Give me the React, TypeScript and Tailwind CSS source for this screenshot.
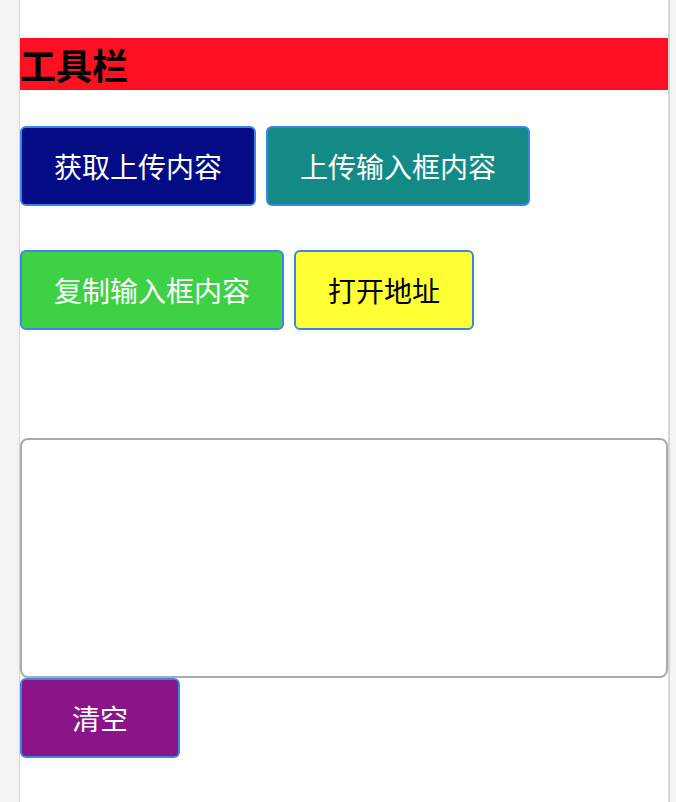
export default function App() {
  return (
    <div className="min-h-[802px] w-full bg-[#f3f3f3] font-['Noto_Sans_CJK_SC',sans-serif]">
      <div className="ml-[19px] w-[651px] min-h-[802px] border-l border-r-2 border-[#d6d6d6] bg-white pt-[38px]">
        <div className="h-[52px] w-[648px] bg-[#ff0f1f] text-[36px] leading-[52px] font-bold text-black">工具栏</div>

        <div className="mt-[36px] flex gap-[10px]">
          <button className="h-[80px] rounded-[6px] border-2 border-[#3a86e8] bg-[#040c85] px-[32px] text-[28px] text-white">获取上传内容</button>
          <button className="h-[80px] rounded-[6px] border-2 border-[#3a86e8] bg-[#148a87] px-[32px] text-[28px] text-white">上传输入框内容</button>
        </div>

        <div className="mt-[44px] flex gap-[10px]">
          <button className="h-[80px] rounded-[6px] border-2 border-[#3a86e8] bg-[#3ed146] px-[32px] text-[28px] text-white">复制输入框内容</button>
          <button className="h-[80px] rounded-[6px] border-2 border-[#3a86e8] bg-[#ffff33] px-[32px] text-[28px] text-black">打开地址</button>
        </div>

        <textarea className="mt-[108px] block h-[240px] w-[648px] resize-none rounded-[8px] border-2 border-[#ababab] bg-white outline-none" />

        <button className="h-[80px] w-[160px] rounded-[6px] border-2 border-[#3a86e8] bg-[#8a1589] text-[28px] text-white">清空</button>
      </div>
    </div>
  )
}
